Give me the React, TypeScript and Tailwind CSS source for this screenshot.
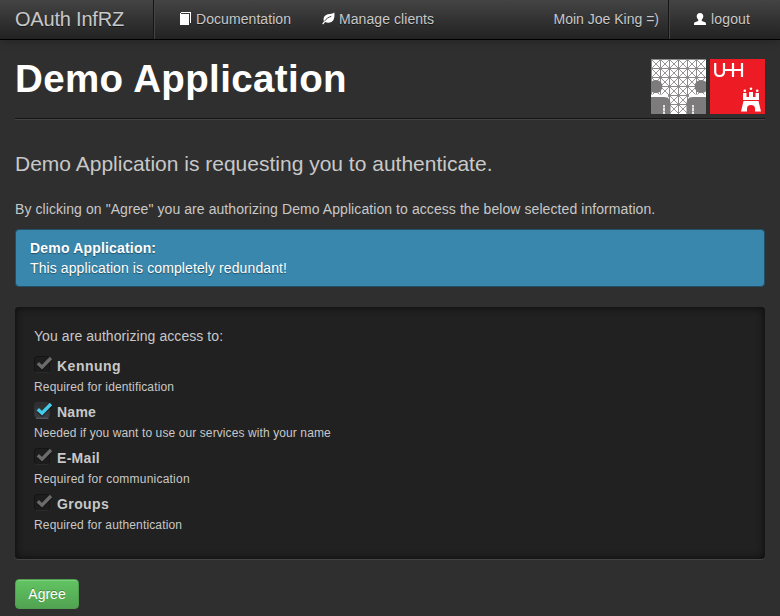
import React from "react";

function BookIcon() {
  return (
    <svg width="12" height="13" viewBox="0 0 12 13" className="shrink-0" shapeRendering="crispEdges">
      <path d="M0 2h9v11H0z" fill="#fff" />
      <path d="M1 0h10v1H1zM10 0h1v11h-1zM0 1h1v1H0z" fill="#fff" />
    </svg>
  );
}

function LeafIcon() {
  return (
    <svg width="13" height="13" viewBox="0 0 13 13" className="shrink-0">
      <path d="M12.3.4C12.8 4 12.4 8 9.7 9.7 7.500 11.100 5 10.800 3.100 10.100L1.200 12.400.2 11.800 1.900 9.400C.8 5.700 2.600 3 5.800 2.200 8.200 1.600 10.900 2 12.300.4Z" fill="#fff" />
      <path d="M2.400 9.300C4.300 6.500 6.300 5.300 9.300 4.300" fill="none" stroke="#333" strokeWidth=".9" />
    </svg>
  );
}

function UserIcon() {
  return (
    <svg width="12" height="12" viewBox="0 0 12 12" className="shrink-0">
      <path d="M6 0C8.100 0 9.300 1.300 9.300 3.200 9.300 4.800 8.500 5.700 7.800 6.600V8L11.200 9.300C11.800 9.600 12 10 12 12H0C0 10 .2 9.600.8 9.300L4.200 8V6.600C3.500 5.700 2.700 4.800 2.700 3.200 2.700 1.300 3.900 0 6 0Z" fill="#fff" />
    </svg>
  );
}

function GridLogo() {
  const cells = [0, 1, 2, 3, 4, 5];
  return (
    <svg width="55" height="55" viewBox="0 0 55 55">
      <rect width="55" height="55" fill="#fff" />
      <g stroke="#8b8989" fill="none">
        {cells.map((n) => (
          <path key={n} d={`M${n * 9 + 0.5} 0V55M0 ${n * 9 + 0.5}H55`} strokeWidth="1" />
        ))}
        {cells.map((r) =>
          cells.map((c) => (
            <path key={`${r}-${c}`} d={`M${c * 9 + 0.5} ${r * 9 + 0.5}l9 9m0-9l-9 9`} strokeWidth=".9" />
          )),
        )}
      </g>
      <path d="M0 35.500h17v3H0zM38 35.500h17v3H38z" fill="#fff" />
      <g fill="#7d7b7c">
        <circle cx="4.800" cy="27.500" r="6.600" />
        <circle cx="50.200" cy="27.500" r="6.600" />
        <path d="M0 38H13Q19.500 38 19.500 45V55H0zM55 38H42Q35.500 38 35.500 45V55H55z" />
      </g>
      <path d="M13 46v9M42 46v9" stroke="#fff" strokeWidth="1.600" strokeDasharray="2 .6 4 .5" />
    </svg>
  );
}

function UniversityLogo() {
  return (
    <svg width="55" height="55" viewBox="0 0 55 55">
      <rect width="55" height="55" fill="#ed1c24" />
      <path d="M5.200 4V13Q5.200 17 9.600 17T14 13V4M14 11H32M23 4V18M32 4V18" fill="none" stroke="#fff" strokeWidth="2.200" />
      <path d="M31 52.500L33.500 42H48.500L51 52.500H45V49.500Q45 46 41 46T37 49.500V52.500z" fill="#fff" />
      <path d="M33 34h3.500v4h2.500v-5h4v5h2.500v-4H49v7H33z" fill="#fff" />
      <circle cx="34.800" cy="31.800" r="1.300" fill="#fff" />
      <circle cx="41" cy="29.800" r="1.300" fill="#fff" />
      <circle cx="47.200" cy="31.800" r="1.300" fill="#fff" />
    </svg>
  );
}

function CheckBox({ active }: { active: boolean }) {
  return (
    <svg width="19" height="17" viewBox="0 0 19 17" className="shrink-0">
      <defs>
        <linearGradient id="boxFill" x1="0" y1="0" x2="0" y2="1">
          <stop offset="0" stopColor="#2b2c2e" />
          <stop offset="1" stopColor="#3b3e42" />
        </linearGradient>
      </defs>
      <rect x=".5" y=".5" width="15" height="15" rx="2.500" fill={active ? "url(#boxFill)" : "#1d1d1d"} stroke={active ? "#303236" : "#141414"} />
      <path d="M2 16.200H14.500" stroke={active ? "#64707a" : "#303030"} />
      <path d="M4 8L8 11.800 17 2.500" fill="none" stroke="#111" strokeWidth="3.300" transform="translate(0 1)" opacity=".6" />
      <path d="M3.800 7.300L8 11.200 17 2" fill="none" stroke={active ? "#43cbea" : "#6b6b6b"} strokeWidth="3.300" />
    </svg>
  );
}

const scopes = [
  { name: "Kennung", note: "Required for identification", active: false, nameTracking: "tracking-[0.5px]", noteTracking: "tracking-[0.15px]" },
  { name: "Name", note: "Needed if you want to use our services with your name", active: true, nameTracking: "tracking-[0.25px]", noteTracking: "tracking-[0.1px]" },
  { name: "E-Mail", note: "Required for communication", active: false, nameTracking: "tracking-[0.3px]", noteTracking: "tracking-[0.22px]" },
  { name: "Groups", note: "Required for authentication", active: false, nameTracking: "tracking-[0.4px]", noteTracking: "tracking-[0.15px]" },
];

export default function App() {
  return (
    <div className="h-[616px] w-[780px] overflow-hidden bg-[#2f2f2f] font-['Liberation_Sans',Arial,sans-serif] text-[14px] leading-5 text-[#c8c8c8]">
      <nav className="flex h-10 items-stretch border-b border-black bg-linear-to-b from-[#444] to-[#222] shadow-[0_1px_8px_rgba(0,0,0,0.25)] [text-shadow:0_1px_0_rgba(0,0,0,0.5)]">
        <div className="flex w-[154px] items-center border-r border-[#151515] pb-0.5 pl-[15px] text-[20px]">
          <span className="tracking-[-0.2px] whitespace-nowrap">OAuth InfRZ</span>
        </div>
        <div className="flex flex-1 items-center border-l border-[#444] pb-0.5 pl-[25px]">
          <BookIcon />
          <span className="ml-1 w-[126px] tracking-[0.07px] whitespace-nowrap">Documentation</span>
          <LeafIcon />
          <span className="ml-1 tracking-[0.07px] whitespace-nowrap">Manage clients</span>
        </div>
        <div className="flex items-center border-r border-[#151515] pr-[9px] pb-0.5">
          <span className="whitespace-nowrap">Moin Joe King =)</span>
        </div>
        <div className="flex w-[111px] items-center border-l border-[#444] pb-0.5 pl-6">
          <UserIcon />
          <span className="ml-[5px] tracking-[0.15px] whitespace-nowrap">logout</span>
        </div>
      </nav>

      <main className="px-[15px]">
        <header className="flex h-[79px] items-start justify-between border-b border-[#151515] pt-[19px] shadow-[0_1px_0_#434343]">
          <h1 className="text-[38.5px] leading-10 font-bold tracking-[0.38px] whitespace-nowrap text-white">Demo Application</h1>
          <div className="flex gap-1">
            <GridLogo />
            <UniversityLogo />
          </div>
        </header>

        <h2 className="mt-[35px] h-5 text-[21px] leading-5 whitespace-nowrap">Demo Application is requesting you to authenticate.</h2>
        <p className="mt-[25px] tracking-[0.077px] whitespace-nowrap">By clicking on "Agree" you are authorizing Demo Application to access the below selected information.</p>

        <section className="mt-[10px] h-[58px] rounded-[4px] border border-[#214f66] bg-[#3a87ad] px-[14px] py-2 text-white [text-shadow:0_1px_1px_rgba(0,0,0,0.4)]">
          <strong className="block tracking-[0.18px]">Demo Application:</strong>
          <p className="tracking-[0.1px]">This application is completely redundant!</p>
        </section>

        <section className="mt-5 h-[252px] rounded-[4px] bg-[#212121] px-[19px] pt-[19px] shadow-[inset_0_0_8px_#0a0a0a,0_1px_0_#444]">
          <p className="tracking-[0.07px]">You are authorizing access to:</p>
          <ul className="mt-[10px]">
            {scopes.map((scope) => (
              <li key={scope.name} className="h-[46px]">
                <div className="flex h-5">
                  <CheckBox active={scope.active} />
                  <strong className={`ml-1 ${scope.nameTracking}`}>{scope.name}</strong>
                </div>
                <p className={`mt-px text-[12px] leading-5 whitespace-nowrap ${scope.noteTracking}`}>{scope.note}</p>
              </li>
            ))}
          </ul>
        </section>

        <button className="mt-5 h-[30px] w-16 rounded-[4px] border border-[#4f9f4f] bg-linear-to-b from-[#62c462] to-[#51a351] text-white shadow-[inset_0_1px_0_rgba(255,255,255,0.2)] [text-shadow:0_-1px_0_rgba(0,0,0,0.25)]">
          Agree
        </button>
      </main>
    </div>
  );
}
